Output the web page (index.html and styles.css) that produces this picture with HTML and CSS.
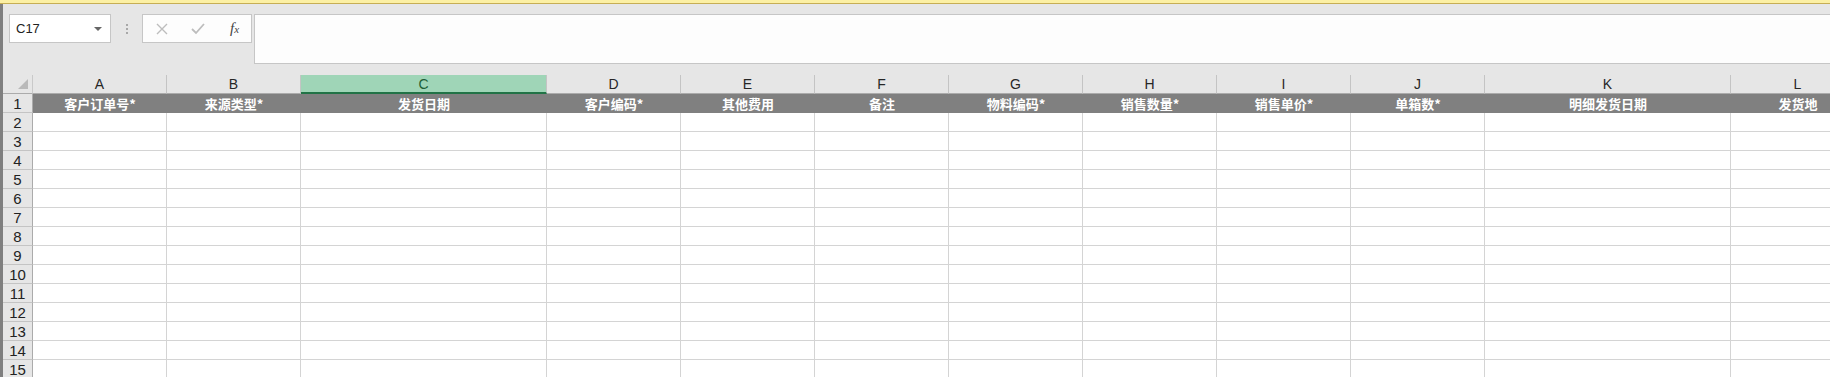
FILE: index.html
```html
<!DOCTYPE html>
<html lang="zh-CN">
<head>
    <meta charset="UTF-8">
    <title>发货明细导入模板</title>
    <link rel="stylesheet" href="styles.css">
</head>
<body>
    <div class="top-strip"></div>
    <div class="app">
        <div class="formula-row">
            <div class="name-box">
                <span>C17</span>
                <span class="caret"></span>
            </div>
            <div class="grip"><i></i><i></i><i></i></div>
            <div class="fx-buttons">
                <svg width="12" height="12" viewBox="0 0 12 12"><path d="M1 1 L11 11 M11 1 L1 11" stroke="#bdbdbd" stroke-width="1.4" fill="none"/></svg>
                <svg width="14" height="12" viewBox="0 0 14 12"><path d="M1 6 L5 10 L13 1" stroke="#bdbdbd" stroke-width="1.8" fill="none"/></svg>
                <span class="fx"><i>f</i><small>x</small></span>
            </div>
            <div class="formula-input"></div>
        </div>

        <div class="sheet" id="sheet">
            <div class="corner"><span class="tri"></span></div>
            <div class="col-head">A</div>
            <div class="col-head">B</div>
            <div class="col-head active">C</div>
            <div class="col-head">D</div>
            <div class="col-head">E</div>
            <div class="col-head">F</div>
            <div class="col-head">G</div>
            <div class="col-head">H</div>
            <div class="col-head">I</div>
            <div class="col-head">J</div>
            <div class="col-head">K</div>
            <div class="col-head">L</div>

            <div class="row-head">1</div>
            <div class="title-cell">客户订单号*</div>
            <div class="title-cell">来源类型*</div>
            <div class="title-cell">发货日期</div>
            <div class="title-cell">客户编码*</div>
            <div class="title-cell">其他费用</div>
            <div class="title-cell">备注</div>
            <div class="title-cell">物料编码*</div>
            <div class="title-cell">销售数量*</div>
            <div class="title-cell">销售单价*</div>
            <div class="title-cell">单箱数*</div>
            <div class="title-cell">明细发货日期</div>
            <div class="title-cell">发货地</div>
        </div>
    </div>

    <script>
        // empty data rows 2..15
        const sheet = document.getElementById('sheet');
        for (let r = 2; r <= 15; r++) {
            const head = document.createElement('div');
            head.className = 'row-head';
            head.textContent = r;
            sheet.appendChild(head);
            for (let c = 0; c < 12; c++) {
                const cell = document.createElement('div');
                cell.className = 'cell';
                sheet.appendChild(cell);
            }
        }
    </script>
</body>
</html>
```

FILE: styles.css
```css
body {
    margin: 0;
    height: 377px;
    overflow: hidden;
    background-color: #e6e6e6;
    font-family: "Liberation Sans", Arial, sans-serif;
}
.top-strip {
    height: 3px;
    background-color: #fcf0a4;
    border-bottom: 1px solid #c6ae55;
}
.app {
    border-left: 3px solid #7f7f7f;
    height: 373px;
    overflow: hidden;
}
.formula-row {
    display: flex;
    align-items: flex-start;
    padding: 10px 0 11px 6px;
}
.name-box {
    box-sizing: border-box;
    width: 102px;
    height: 29px;
    background-color: #fff;
    border: 1px solid #c6c6c6;
    display: flex;
    align-items: center;
    justify-content: space-between;
    padding: 0 8px 0 6px;
    font-size: 13px;
    color: #222;
}
.caret {
    width: 0;
    height: 0;
    border-left: 4px solid transparent;
    border-right: 4px solid transparent;
    border-top: 4px solid #666;
}
.grip {
    width: 31px;
    height: 29px;
    display: flex;
    flex-direction: column;
    align-items: center;
    justify-content: center;
    gap: 2px;
}
.grip i {
    width: 2px;
    height: 2px;
    background-color: #a8a8a8;
}
.fx-buttons {
    box-sizing: border-box;
    width: 110px;
    height: 29px;
    background-color: #fdfdfd;
    border: 1px solid #c6c6c6;
    display: flex;
    align-items: center;
    gap: 23px;
    padding-left: 13px;
}
.fx {
    font-family: "Liberation Serif", serif;
    color: #444;
    font-size: 15px;
    margin-left: 2px;
}
.fx small {
    font-size: 11px;
    font-style: italic;
}
.formula-input {
    flex: 1;
    box-sizing: border-box;
    height: 50px;
    margin-left: 2px;
    background-color: #fdfdfd;
    border: 1px solid #c6c6c6;
    border-right: none;
}
.sheet {
    display: grid;
    grid-template-columns: 30px 134px 134px 246px repeat(7, 134px) 246px 134px;
    grid-auto-rows: 19px;
    width: max-content;
    background-color: #fff;
}
.sheet > div {
    box-sizing: border-box;
}
.corner {
    background-color: #e6e6e6;
    border-right: 1px solid #c9c9c9;
    border-bottom: 1px solid #ababab;
    position: relative;
}
.tri {
    position: absolute;
    right: 4px;
    bottom: 4px;
    width: 0;
    height: 0;
    border-left: 10px solid transparent;
    border-bottom: 10px solid #b9b9b9;
}
.col-head {
    background-color: #e6e6e6;
    border-right: 1px solid #c4c4c4;
    border-bottom: 1px solid #ababab;
    text-align: center;
    font-size: 14px;
    line-height: 19px;
    color: #262626;
}
.col-head.active {
    background-color: #9fd5b7;
    border-bottom: 2px solid #217346;
    color: #1d5e36;
}
.row-head {
    background-color: #e6e6e6;
    border-right: 1px solid #ababab;
    border-bottom: 1px solid #c4c4c4;
    text-align: center;
    font-size: 15px;
    line-height: 19px;
    color: #222;
}
.title-cell {
    background-color: #808080;
    color: #fff;
    font-family: "Noto Sans CJK SC", sans-serif;
    font-weight: bold;
    font-size: 13px;
    line-height: 19px;
    text-align: center;
    white-space: nowrap;
}
.cell {
    border-right: 1px solid #d4d4d4;
    border-bottom: 1px solid #d4d4d4;
}
```
